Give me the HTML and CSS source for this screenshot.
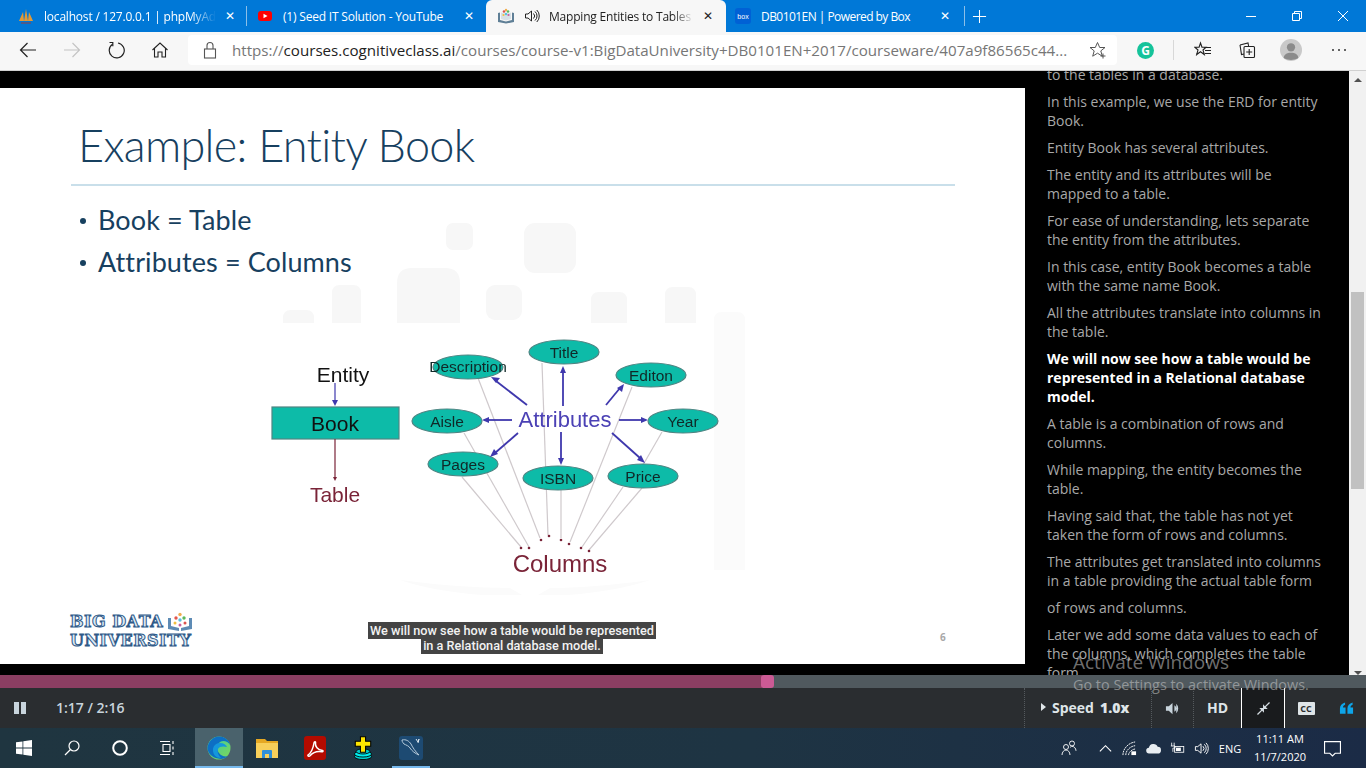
FILE: index.html
```html
<!DOCTYPE html>
<html lang="en">

<head>
    <meta charset="UTF-8">
    <title>Mapping Entities to Tables</title>
    <link rel="stylesheet" href="styles.css">
</head>

<body>

    <!-- browser tabs -->
    <div class="tabstrip">
        <div class="tab tab-first">
            <svg class="favicon" viewBox="0 0 16 16"><path d="M1 13 5 4l1 9zM6 13 8 1l2 12zM10 13l1-9 4 9z" fill="#e39a35"/><path d="M3 15h10" stroke="#4a5a8c" stroke-width="2"/></svg>
            <span class="tab-title fade">localhost / 127.0.0.1 | phpMyAdmin</span>
            <span class="tab-close">&#x2715;</span>
        </div>
        <div class="tab-sep"></div>
        <div class="tab tab-second">
            <svg class="favicon" viewBox="0 0 16 16"><rect x="1" y="3" width="14" height="10" rx="3" fill="#f00"/><path d="M6.500 5.700v4.600L10.500 8z" fill="#fff"/></svg>
            <span class="tab-title">(1) Seed IT Solution - YouTube</span>
            <span class="tab-close">&#x2715;</span>
        </div>
        <div class="tab tab-active">
            <svg class="favicon" viewBox="0 0 16 16"><path d="M0 5l2-.5V12l6 1.500L14 12V4.500l2 .5v9l-8 1.500L0 14z" fill="#5f7f96"/><path d="M3 4.500 8 6l5-1.500V11l-5 1.500L3 11z" fill="#d8e0e6"/><circle cx="6" cy="3.500" r="1.300" fill="#d9534f"/><circle cx="10" cy="3.500" r="1.300" fill="#5cb85c"/><circle cx="8" cy="2" r="1.200" fill="#f0ad4e"/><circle cx="8" cy="6" r="1.300" fill="#5bc0de"/><circle cx="5.500" cy="7" r="1.100" fill="#f0c040"/><circle cx="10.500" cy="7" r="1.100" fill="#c45fa0"/></svg>
            <svg class="favicon speaker" viewBox="0 0 16 16" fill="none" stroke="#222" stroke-width="1"><path d="M1.500 6v4h2.500l3.500 3V3L4 6z"/><path d="M9.500 5.500a3.500 3.500 0 0 1 0 5M11 3.500a6 6 0 0 1 0 9M12.800 2a8.500 8.500 0 0 1 0 12"/></svg>
            <span class="tab-title fade">Mapping Entities to Tables (Course)</span>
            <span class="tab-close">&#x2715;</span>
        </div>
        <div class="tab tab-last">
            <svg class="favicon" viewBox="0 0 16 16"><rect x="0" y="0" width="16" height="16" rx="3" fill="#0061d5"/><text x="8" y="10.500" class="box-mark">box</text></svg>
            <span class="tab-title">DB0101EN | Powered by Box</span>
            <span class="tab-close">&#x2715;</span>
        </div>
        <div class="tab-sep"></div>
        <svg class="new-tab" viewBox="0 0 16 16"><path d="M8 1v14M1 8h14" stroke="#fff" stroke-width="1.100"/></svg>
        <div class="window-buttons">
            <svg viewBox="0 0 12 12"><path d="M1 6.500h10" stroke="#fff"/></svg>
            <svg viewBox="0 0 12 12" fill="none" stroke="#fff"><path d="M1.500 3.500h7v7h-7zM3.500 3.500v-2h7v7h-2"/></svg>
            <svg viewBox="0 0 12 12"><path d="M1 1l10 10M11 1 1 11" stroke="#fff"/></svg>
        </div>
    </div>

    <!-- address bar -->
    <div class="toolbar">
        <button class="tool-btn">
            <svg viewBox="0 0 18 18" fill="none" stroke="#222" stroke-width="1.200"><path d="M17 9H1.500M8.500 2 1.500 9l7 7"/></svg>
        </button>
        <button class="tool-btn">
            <svg viewBox="0 0 18 18" fill="none" stroke="#c4c4c4" stroke-width="1.200"><path d="M1 9h15.500M9.500 2l7 7-7 7"/></svg>
        </button>
        <button class="tool-btn">
            <svg viewBox="0 0 18 18" fill="none" stroke="#222" stroke-width="1.200"><path d="M5.500 3.200A7.500 7.500 0 1 0 11 2"/><path d="M2.500 1.500h3.300v3.800"/></svg>
        </button>
        <button class="tool-btn">
            <svg viewBox="0 0 18 18" fill="none" stroke="#222" stroke-width="1.100"><path d="M1.500 9 9 2l7.500 7M3.500 7.500V16H7v-5h4v5h3.500V7.500"/></svg>
        </button>
        <div class="address">
            <svg class="lock" viewBox="0 0 14 18" fill="none" stroke="#555" stroke-width="1.100"><rect x="1.500" y="8" width="11" height="9"/><path d="M4 8V4.500a3 3 0 0 1 6 0V8"/></svg>
            <span class="url"><span class="url-dim">https://</span>courses.cognitiveclass.ai<span class="url-dim">/courses/course-v1:BigDataUniversity+DB0101EN+2017/courseware/407a9f86565c44...</span></span>
            <svg class="star" viewBox="0 0 18 18" fill="none" stroke="#555"><path d="M8.500 1.500l2.200 5h5.300l-4.200 3.400 1.500 5.300-4.800-3-4.800 3 1.500-5.300L1 6.500h5.300z"/><path d="M14 12.500v5M11.500 15h5"/></svg>
        </div>
        <div class="grammarly">G</div>
        <div class="tool-sep"></div>
        <button class="tool-btn">
            <svg viewBox="0 0 18 18" fill="none" stroke="#222" stroke-width="1.100"><path d="M6.500 2l1.500 4.200h-.5 4.500L9 9l1.300 4.500-3.800-2.800-3.800 2.800L4 9 .8 6.200h4.300z"/><path d="M10.500 6.500H17M11 9.500h6M11 12.500h6"/></svg>
        </button>
        <button class="tool-btn">
            <svg viewBox="0 0 18 18" fill="none" stroke="#222" stroke-width="1.100"><path d="M2 4 10 2l.6 3M2 4l1.500 9.500 2.500-.5"/><rect x="6" y="5.500" width="10.500" height="11" rx="1" fill="#f7f7f7"/><path d="M11.200 8v6M8.200 11h6"/></svg>
        </button>
        <button class="tool-btn">
            <span class="avatar"><svg viewBox="0 0 24 24"><circle cx="12" cy="9" r="4.500" fill="#8b8b8b"/><path d="M4 21c0-4 3.500-6 8-6s8 2 8 6q-8 4-16 0z" fill="#8b8b8b"/></svg></span>
        </button>
        <button class="tool-btn more">
            <svg viewBox="0 0 18 18" fill="#333"><circle cx="3" cy="9" r="1"/><circle cx="9" cy="9" r="1"/><circle cx="15" cy="9" r="1"/></svg>
        </button>
    </div>

    <div class="page">
        <div class="video-area">
            <div class="slide">
                <svg class="slide-art" viewBox="0 88 1025 576">
                    <!-- faint watermark behind the slide -->
                    <g fill="#f7f7f7">
                        <rect x="446" y="223" width="27" height="27" rx="7"/>
                        <rect x="524" y="223" width="52" height="50" rx="11"/>
                        <path d="M397 323v-40q0-15 15-15h33q15 0 15 15v40z"/>
                        <path d="M332 323v-30q0-8 8-8h13q8 0 8 8v30z"/>
                        <path d="M283 323v-5q0-8 8-8h15q8 0 8 8v5z"/>
                        <rect x="486" y="285" width="36" height="35" rx="9"/>
                        <path d="M591 323v-23q0-8 8-8h20q8 0 8 8v23z"/>
                        <path d="M665 323v-28q0-8 8-8h15q8 0 8 8v28z"/>
                    </g>
                    <g fill="#fbfbfb">
                        <path d="M714 570V320q0-8 8-8h15q8 0 8 8v250z"/>
                        <path d="M400 580q60 8 110 8l12 7h-40q-50-4-82-15zM650 580q-60 8-100 8l-12 7h30q50-4 82-15z"/>
                    </g>

                    <!-- gray connector lines to the columns -->
                    <g stroke="#cfc9cc" stroke-width="1.200">
                        <path d="M464 433 529 547"/>
                        <path d="M478 378 540 538"/>
                        <path d="M542 363 548 535"/>
                        <path d="M561 490 561 538"/>
                        <path d="M632 387 570 542"/>
                        <path d="M623 487 582 547"/>
                        <path d="M642 488 589 550"/>
                        <path d="M662 432 643 465"/>
                        <path d="M462 477 521 547"/>
                    </g>
                    <g fill="#7a2438">
                        <circle cx="521" cy="548" r="1.300"/>
                        <circle cx="529" cy="548" r="1.300"/>
                        <circle cx="541" cy="540" r="1.300"/>
                        <circle cx="549" cy="536" r="1.300"/>
                        <circle cx="561" cy="540" r="1.300"/>
                        <circle cx="569" cy="544" r="1.300"/>
                        <circle cx="581" cy="548" r="1.300"/>
                        <circle cx="589" cy="551" r="1.300"/>
                    </g>

                    <!-- ellipses -->
                    <g fill="#0dbba8" stroke="#4f8583" stroke-width="1.200">
                        <ellipse cx="468" cy="367" rx="35" ry="12"/>
                        <ellipse cx="564" cy="352" rx="35" ry="12"/>
                        <ellipse cx="651" cy="375" rx="35" ry="12"/>
                        <ellipse cx="447" cy="421" rx="35" ry="12"/>
                        <ellipse cx="683" cy="421" rx="35" ry="12"/>
                        <ellipse cx="463" cy="464" rx="35" ry="12"/>
                        <ellipse cx="558" cy="478" rx="35" ry="12"/>
                        <ellipse cx="643" cy="476" rx="35" ry="12"/>
                        <rect x="272" y="407" width="127" height="32"/>
                    </g>

                    <!-- blue arrows -->
                    <g stroke="#3f38ad" stroke-width="1.800" fill="#3f38ad">
                        <path d="M527 405 496 381"/><path d="M491 377l9 1-4 5z" stroke="none"/>
                        <path d="M563 406V370"/><path d="M563 366l3 7h-6z" stroke="none"/>
                        <path d="M606 405 620 388"/><path d="M624 384l-2 8-5-4z" stroke="none"/>
                        <path d="M512 420H488"/><path d="M482 420l7-3v6z" stroke="none"/>
                        <path d="M619 420H642"/><path d="M648 420l-7-3v6z" stroke="none"/>
                        <path d="M518 433 495 453"/><path d="M490 457l4-8 4 5z" stroke="none"/>
                        <path d="M561 432V460"/><path d="M561 465l-3-7h6z" stroke="none"/>
                        <path d="M612 433 640 458"/><path d="M645 463l-8-3 4-5z" stroke="none"/>
                        <path d="M335 383V401" stroke-width="1.200"/><path d="M335 406l-3-6h6z" stroke="none"/>
                    </g>
                    <path d="M335 439V478" stroke="#7a2438" stroke-width="1.200"/>
                    <path d="M335 481l-2-4h4z" fill="#7a2438"/>

                    <!-- labels -->
                    <text x="343" y="382" class="dia-big">Entity</text>
                    <text x="335" y="431" class="dia-big">Book</text>
                    <text x="335" y="502" class="dia-big dia-maroon">Table</text>
                    <text x="565" y="427" class="dia-attr">Attributes</text>
                    <text x="560" y="572" class="dia-cols">Columns</text>
                    <text x="468" y="372" class="dia-node">Description</text>
                    <text x="564" y="358" class="dia-node">Title</text>
                    <text x="651" y="381" class="dia-node">Editon</text>
                    <text x="447" y="427" class="dia-node">Aisle</text>
                    <text x="683" y="427" class="dia-node">Year</text>
                    <text x="463" y="470" class="dia-node">Pages</text>
                    <text x="558" y="484" class="dia-node">ISBN</text>
                    <text x="643" y="482" class="dia-node">Price</text>
                </svg>

                <h1 class="slide-title">Example: Entity Book</h1>
                <div class="slide-rule"></div>
                <ul class="slide-list">
                    <li>Book = Table</li>
                    <li>Attributes = Columns</li>
                </ul>

                <div class="slide-logo">
                    <div class="logo-top">
                        <span>BIG DATA</span>
                        <svg viewBox="0 0 26 20"><path d="M1 6v11l11 2V16L4 14V6zM25 6v11l-11 2V16l8-2V6z" fill="#5d8bb5"/><circle cx="9" cy="6" r="1.700" fill="#e2574c"/><circle cx="13" cy="2.500" r="1.700" fill="#f0ad4e"/><circle cx="17" cy="6" r="1.700" fill="#5cb85c"/><circle cx="13" cy="8" r="1.700" fill="#5bc0de"/><circle cx="8" cy="11" r="1.500" fill="#f0c040"/><circle cx="18" cy="11" r="1.500" fill="#d9534f"/><circle cx="13" cy="13" r="1.500" fill="#c45fa0"/></svg>
                    </div>
                    <div>UNIVERSITY</div>
                </div>
                <div class="caption"><span>We will now see how a table would be represented<br>in a Relational database model.</span></div>
                <div class="page-num">6</div>
            </div>
        </div>

        <div class="transcript">
            <div class="transcript-inner">
                <p>to the tables in a database.</p>
                <p>In this example, we use the ERD for entity<br>Book.</p>
                <p>Entity Book has several attributes.</p>
                <p>The entity and its attributes will be<br>mapped to a table.</p>
                <p>For ease of understanding, lets separate<br>the entity from the attributes.</p>
                <p>In this case, entity Book becomes a table<br>with the same name Book.</p>
                <p>All the attributes translate into columns in<br>the table.</p>
                <p class="current">We will now see how a table would be<br>represented in a Relational database<br>model.</p>
                <p>A table is a combination of rows and<br>columns.</p>
                <p>While mapping, the entity becomes the<br>table.</p>
                <p>Having said that, the table has not yet<br>taken the form of rows and columns.</p>
                <p>The attributes get translated into columns<br>in a table providing the actual table form</p>
                <p>of rows and columns.</p>
                <p>Later we add some data values to each of<br>the columns, which completes the table<br>form.</p>
            </div>
        </div>

        <div class="scrollbar">
            <div class="arrow-up"></div>
            <div class="thumb"></div>
            <div class="arrow-down"></div>
        </div>
    </div>

    <!-- player controls -->
    <div class="progress">
        <div class="progress-played"></div>
        <div class="progress-handle"></div>
    </div>
    <div class="controls">
        <div class="pause"><span></span><span></span></div>
        <div class="time">1:17 / 2:16</div>
        <div class="control-cell speed"><span class="speed-caret"></span>Speed<b>1.0x</b></div>
        <div class="control-cell volume">
            <svg viewBox="0 0 16 16" fill="#c8d4dc"><path d="M1 5.500v5h3l4 3.500V2L4 5.500z"/><path d="M10 4.500a4 4 0 0 1 0 7zM12 3a7 7 0 0 1 0 10z"/></svg>
        </div>
        <div class="control-cell hd">HD</div>
        <div class="control-cell fullscreen">
            <svg viewBox="0 0 14 14" fill="#d5dde2"><path d="M13 0 14 1 9.500 5.500 11.500 7.500 6.500 7.500 6.500 2.500 8.500 4.500zM1 14 0 13 4.500 8.500 2.500 6.500H7.500V11.500L5.500 9.500z"/></svg>
        </div>
        <div class="control-cell cc"><span>CC</span></div>
        <div class="control-cell quote">
            <svg viewBox="0 0 16 12" fill="#0ea5e9"><path d="M1 12V6.500C1 3 3 1 6.500 0v2.500C5 3 4.300 4 4.300 5.500H7V12zM9 12V6.500C9 3 11 1 14.500 0v2.500C13 3 12.300 4 12.300 5.500H15V12z"/></svg>
        </div>
    </div>

    <!-- windows taskbar -->
    <div class="taskbar">
        <div class="task-cell">
            <svg viewBox="0 0 16 16" fill="#fff"><path d="M0 2.300 6.500 1.400v6.200H0zM7.300 1.300 16 0v7.600H7.300zM0 8.400h6.500v6.200L0 13.700zM7.300 8.400H16V16l-8.700-1.300z"/></svg>
        </div>
        <div class="task-cell">
            <svg viewBox="0 0 16 16" fill="none" stroke="#fff" stroke-width="1.200"><circle cx="10" cy="6" r="5"/><path d="M6.500 9.500 1 15"/></svg>
        </div>
        <div class="task-cell">
            <svg viewBox="0 0 16 16" fill="none" stroke="#fff" stroke-width="2"><circle cx="8" cy="8" r="6.800"/></svg>
        </div>
        <div class="task-cell">
            <svg viewBox="0 0 16 16" fill="none" stroke="#fff" stroke-width="1.100"><path d="M0 1.500h10M3 4.500h7v7H3zM0 14.500h10M13 1v3M13 6.500v3M13 12v3"/></svg>
        </div>
        <div class="task-cell task-running task-edge">
            <svg viewBox="0 0 24 24"><defs><linearGradient id="edgeA" x1="0" y1="0" x2="1" y2="1"><stop offset="0" stop-color="#39c7a8"/><stop offset="1" stop-color="#7ed957"/></linearGradient></defs><circle cx="12" cy="12" r="11.500" fill="url(#edgeA)"/><path d="M.5 12C1 5 7 .5 12 .5c5 0 10 3 11 8.500-2-4-7-5-10-3-3 2-4 7-1 11 2 3 6 4 9 3-3 3-7 3.500-10 2.500C5 21.500.5 17 .5 12z" fill="#0d6fc4"/><path d="M6 15c-.5-5 3-8 7-8s6 2 7 4c-3-1-8-1-9 2-1 3 0 6 3 9-5 0-7.500-3-8-7z" fill="#1597dc"/></svg>
        </div>
        <div class="task-cell">
            <svg viewBox="0 0 24 24"><path d="M1 3h9l2 2h11v5H1z" fill="#e5a823"/><rect x="1" y="7" width="22" height="15" fill="#f7cf5a"/><path d="M7 22v-7q0-1 1-1h8q1 0 1 1v7h-3v-4h-4v4z" fill="#2f8fd8"/></svg>
        </div>
        <div class="task-cell task-pdf">
            <svg viewBox="0 0 24 24"><rect x="1" y="0" width="22" height="24" rx="3" fill="#b30b00"/><path d="M5 19c3-2 5-6 6-12 .2-2 2-1.500 1.500 0-.5 3 2 7 7 7.500 1 .3.500 1.500-.5 1.300-5-1-9 .5-12 4-1 1-2.500 0-2-.8z" fill="none" stroke="#fff" stroke-width="1.500"/></svg>
        </div>
        <div class="task-cell">
            <svg viewBox="0 0 24 28"><ellipse cx="12" cy="24" rx="10" ry="3.500" fill="#0cc" stroke="#000"/><ellipse cx="12" cy="21" rx="10" ry="3.500" fill="#0ee" stroke="#000"/><ellipse cx="12" cy="18" rx="8" ry="3" fill="#0cc" stroke="#000"/><path d="M9 1h6v5h6v6h-6v7H9v-7H3V6h6z" fill="#ffe600" stroke="#000" stroke-width="1.200"/></svg>
        </div>
        <div class="task-cell task-running task-mysql">
            <svg viewBox="0 0 24 24"><rect width="24" height="24" rx="3" fill="#1d4a72"/><path d="M3 4c4-1 7 1 9 4 2 4 4 7 8 11-4-1.500-7-4-9-7-1-2-4-3-6-4-1-1.500-2-2-2-4z" fill="none" stroke="#b6cadb"/><path d="M17 3l2 3 1-3-1 4" fill="none" stroke="#dbe6ef"/></svg>
        </div>

        <div class="tray">
            <div class="tray-person">
                <svg viewBox="0 0 16 16" fill="none" stroke="#fff" stroke-width=".9"><circle cx="11" cy="3.500" r="2.500"/><circle cx="5" cy="7" r="2.500"/><path d="M1 15c0-3 2-5 4-5s4 2 4 5M9 7.500c1-1 1.500-1.200 2-1.200 2 0 4 2 4 4.500"/></svg>
            </div>
            <div class="tray-item tray-first">
                <svg viewBox="0 0 16 16" fill="none" stroke="#fff" stroke-width="1.200"><path d="M2 11l6-6 6 6"/></svg>
            </div>
            <div class="tray-item">
                <svg viewBox="0 0 16 16" fill="none" stroke="#fff" stroke-width="1"><path d="M1 15C1 8 7 2 14 1M4 15c0-5 5-9.500 10-10M7 15c0-3 3.500-6 7-6.500" stroke-dasharray="2 .7"/><rect x="10" y="11" width="5" height="4" fill="#fff" stroke="none"/></svg>
            </div>
            <div class="tray-item">
                <svg viewBox="0 0 18 14" fill="#e8edf1"><path d="M4 13a3.500 3.500 0 0 1-.5-7A5.500 5.500 0 0 1 14 5a4 4 0 0 1 0 8z"/></svg>
            </div>
            <div class="tray-item">
                <svg viewBox="0 0 18 16" fill="none" stroke="#fff"><rect x="5.500" y="5.500" width="11" height="7"/><rect x="7" y="7" width="6" height="4" fill="#fff" stroke="none"/><path d="M2 1v4M5 1v4M1 5h5v2.500H3.500V12"/></svg>
            </div>
            <div class="tray-item">
                <svg viewBox="0 0 16 16" fill="none" stroke="#fff"><path d="M1.500 6v4h2.500l3.500 3V3L4 6z"/><path d="M9.500 5.500a3.500 3.500 0 0 1 0 5M11 3.500a6 6 0 0 1 0 9M12.800 2a8.500 8.500 0 0 1 0 12"/></svg>
            </div>
            <div class="tray-lang">ENG</div>
            <div class="tray-clock">11:11 AM<br>11/7/2020</div>
            <div class="tray-notify">
                <svg viewBox="0 0 16 16" fill="none" stroke="#fff" stroke-width="1.100"><path d="M.5 1.500h15v11h-5l-2.500 2.500-2.500-2.500h-5z"/></svg>
            </div>
        </div>
    </div>

    <div class="activate">
        <div class="activate-title">Activate Windows</div>
        <div class="activate-sub">Go to Settings to activate Windows.</div>
    </div>

</body>

</html>
```

FILE: styles.css
```css
* {
    box-sizing: border-box;
}

html,
body {
    margin: 0;
    padding: 0;
}

body {
    position: relative;
    width: 1366px;
    height: 768px;
    overflow: hidden;
    display: flex;
    flex-direction: column;
    font-family: "Open Sans", "Noto Sans", sans-serif;
    background: #000;
}

/* tab strip */
.tabstrip {
    height: 32px;
    display: flex;
    align-items: center;
    background: #0078d7;
    color: #fff;
    font-size: 12px;
}

.tab {
    height: 32px;
    display: flex;
    align-items: center;
    flex-shrink: 0;
}

.tab-first {
    width: 246px;
    padding: 0 8px 0 18px;
}

.tab-second {
    width: 239px;
    padding: 0 9px 0 10px;
}

.tab-active {
    width: 240px;
    padding: 0 10px 0 12px;
    background: #f7f7f7;
    color: #222;
    border-radius: 6px 6px 0 0;
}

.tab-last {
    width: 238px;
    padding: 0 11px 0 9px;
}

.favicon {
    width: 16px;
    height: 16px;
    flex-shrink: 0;
    margin-right: 10px;
}

.speaker {
    margin-right: 9px;
}

.box-mark {
    font-family: "Liberation Sans", sans-serif;
    font-size: 7px;
    fill: #fff;
    text-anchor: middle;
}

.tab-title {
    flex: 1;
    min-width: 0;
    white-space: nowrap;
    overflow: hidden;
    letter-spacing: -0.2px;
}

.tab-last .tab-title {
    letter-spacing: -0.55px;
}

.fade {
    -webkit-mask-image: linear-gradient(to right, #000 85%, transparent 100%);
    mask-image: linear-gradient(to right, #000 85%, transparent 100%);
}

.tab-close {
    width: 16px;
    margin-left: 6px;
    text-align: center;
    font-size: 12px;
    font-family: "DejaVu Sans", sans-serif;
}

.tab-sep {
    width: 1px;
    height: 20px;
    background: #8cbfe8;
    flex-shrink: 0;
}

.new-tab {
    width: 15px;
    height: 15px;
    margin-left: 7px;
}

.window-buttons {
    margin-left: auto;
    display: flex;
    gap: 34px;
    padding-right: 17px;
}

.window-buttons svg {
    width: 12px;
    height: 12px;
}

/* toolbar */
.toolbar {
    height: 39px;
    display: flex;
    align-items: center;
    padding: 0 0 2px 6px;
    background: #f7f7f7;
    border-bottom: 1px solid #d0d0d0;
}

.tool-btn {
    width: 44px;
    height: 30px;
    padding: 0;
    border: none;
    background: none;
    display: flex;
    align-items: center;
    justify-content: center;
    flex-shrink: 0;
}

.tool-btn svg {
    width: 18px;
    height: 18px;
}

.address {
    width: 929px;
    height: 30px;
    margin-left: 6px;
    padding: 0 10px 0 15px;
    display: flex;
    align-items: center;
    background: #fff;
    border-radius: 4px;
}

.lock {
    width: 14px;
    height: 18px;
    flex-shrink: 0;
}

.url {
    margin-left: 15px;
    flex: 1;
    font-size: 15.130px;
    color: #222;
    white-space: nowrap;
    overflow: hidden;
}

.url-dim {
    color: #767676;
}

.star {
    width: 18px;
    height: 18px;
    flex-shrink: 0;
}

.grammarly {
    width: 17px;
    height: 17px;
    margin-left: 20px;
    border-radius: 50%;
    background: #15c39a;
    color: #fff;
    font-size: 12px;
    font-weight: 700;
    text-align: center;
    line-height: 17px;
}

.tool-sep {
    width: 1px;
    height: 20px;
    margin: 0 7px 0 19px;
    background: #d8d8d8;
}

.avatar {
    width: 22px;
    height: 22px;
    border-radius: 50%;
    background: #c9c9c9;
    overflow: hidden;
    display: block;
}

.avatar svg {
    width: 22px;
    height: 22px;
    display: block;
}

.more {
    margin-left: 4px;
}

/* page area */
.page {
    height: 604px;
    display: flex;
    background: #000;
}

.video-area {
    width: 1025px;
    padding-top: 17px;
}

.slide {
    position: relative;
    width: 1025px;
    height: 576px;
    padding: 24px 71px 0;
    background: #fff;
}

.slide-art {
    position: absolute;
    left: 0;
    top: 0;
    width: 1025px;
    height: 576px;
    filter: blur(0.4px);
}

.slide-title {
    position: relative;
    margin: 0 0 0 7px;
    font-family: Lato, sans-serif;
    font-weight: 300;
    font-size: 45px;
    line-height: 66px;
    letter-spacing: -0.7px;
    font-variant-ligatures: none;
    color: #17405f;
}

.slide-rule {
    position: relative;
    width: 884px;
    height: 2px;
    margin-top: 6px;
    background: #c9dfea;
}

.slide-list {
    position: relative;
    list-style: none;
    margin: 13px 0 0 8px;
    padding: 0 0 0 19px;
    font-family: Lato, sans-serif;
    font-size: 27px;
    line-height: 42px;
    letter-spacing: 0.1px;
    color: #17405f;
}

.slide-list li::before {
    content: "";
    display: inline-block;
    width: 6px;
    height: 6px;
    margin: 0 12px 6px -18px;
    border-radius: 50%;
    background: #17405f;
}

.slide-logo {
    position: absolute;
    left: 70px;
    top: 524px;
    font-family: "DejaVu Serif", serif;
    font-weight: 700;
    font-size: 16px;
    line-height: 18px;
    letter-spacing: 0.5px;
    color: #dbe9f5;
    -webkit-text-stroke: 1px #2f5a88;
}

.logo-top {
    display: flex;
    align-items: center;
}

.logo-top svg {
    width: 26px;
    height: 20px;
    margin-left: 4px;
}

.caption {
    position: absolute;
    left: 312px;
    top: 535px;
    width: 400px;
    text-align: center;
    font-family: Roboto, sans-serif;
    font-weight: 500;
    font-size: 12.700px;
    line-height: 15px;
    color: #f2f2f2;
}

.caption span {
    background: #444;
    padding: 1px 2px;
    -webkit-box-decoration-break: clone;
    box-decoration-break: clone;
}

.page-num {
    position: absolute;
    left: 940px;
    top: 542px;
    font-size: 10px;
    font-weight: 700;
    color: #a8a8a8;
}

/* transcript column */
.transcript {
    width: 324px;
    padding-left: 22px;
    overflow: hidden;
    font-size: 14px;
    line-height: 19px;
    color: #a8a8a8;
}

.transcript-inner {
    margin-top: -6px;
}

.transcript p {
    margin: 0 0 8px;
    white-space: nowrap;
}

.transcript .current {
    color: #fff;
    font-weight: 700;
}

.scrollbar {
    position: relative;
    width: 17px;
    background: #f1f1f1;
}

.thumb {
    position: absolute;
    left: 2px;
    width: 13px;
    top: 221px;
    height: 197px;
    background: #c1c1c1;
}

.arrow-up,
.arrow-down {
    position: absolute;
    left: 5px;
    width: 0;
    height: 0;
    border-left: 4px solid transparent;
    border-right: 4px solid transparent;
}

.arrow-up {
    top: 7px;
    border-bottom: 4px solid #505050;
}

.arrow-down {
    bottom: 0;
    border-top: 4px solid #505050;
}

/* progress bar */
.progress {
    position: relative;
    height: 13px;
    background: #50595e;
}

.progress-played {
    width: 762px;
    height: 13px;
    background: #8b3e62;
}

.progress-handle {
    position: absolute;
    left: 761px;
    top: 0;
    width: 13px;
    height: 13px;
    border-radius: 3px;
    background: #cb5a94;
}

/* control bar */
.controls {
    height: 40px;
    display: flex;
    align-items: center;
    background: #2a2d30;
    color: #c8d4dc;
    font-size: 14px;
}

.pause {
    display: flex;
    gap: 2px;
    width: 56px;
    padding-left: 14px;
}

.pause span {
    width: 5px;
    height: 12px;
    background: #c8d4dc;
}

.time {
    width: 968px;
    font-weight: 600;
    padding-bottom: 2px;
}

.control-cell {
    height: 40px;
    display: flex;
    align-items: center;
    justify-content: center;
    border-left: 1px dotted #555a5e;
    color: #dfe5e8;
    font-weight: 700;
}

.speed {
    width: 127px;
    padding: 0 0 2px 16px;
    justify-content: flex-start;
    font-size: 14px;
}

.speed b {
    margin-left: 6px;
}

.speed-caret {
    width: 0;
    height: 0;
    margin-right: 6px;
    border-left: 5px solid #dfe5e8;
    border-top: 4px solid transparent;
    border-bottom: 4px solid transparent;
}

.volume {
    width: 42px;
}

.volume svg {
    width: 15px;
    height: 15px;
}

.hd {
    width: 48px;
    padding-bottom: 2px;
    font-size: 14px;
}

.fullscreen {
    width: 44px;
    background: #191b1d;
    border-left: 1px solid #fff;
    border-right: 1px solid #fff;
}

.fullscreen svg {
    width: 13px;
    height: 13px;
}

.cc {
    width: 42px;
    border-left: none;
}

.cc span {
    width: 17px;
    height: 13px;
    background: #dfe5e8;
    color: #2a2d30;
    font-size: 9px;
    line-height: 13px;
    text-align: center;
    border-radius: 1px;
}

.quote {
    width: 39px;
    border-left: none;
}

.quote svg {
    width: 15px;
    height: 12px;
}

/* taskbar */
.taskbar {
    height: 40px;
    display: flex;
    background: linear-gradient(to right, #1f3540 0%, #1e3443 55%, #1b2b46 100%);
    color: #fff;
}

.task-cell {
    position: relative;
    width: 48px;
    height: 40px;
    display: flex;
    align-items: center;
    justify-content: center;
    flex-shrink: 0;
}

.task-cell svg {
    width: 16px;
    height: 16px;
}

.task-edge svg,
.task-edge ~ .task-cell svg {
    width: 24px;
    height: 24px;
}

.task-edge {
    margin-left: 3px;
    background: #4a626c;
}

.task-running::after {
    content: "";
    position: absolute;
    bottom: 0;
    left: 0;
    right: 0;
    height: 2px;
    background: #76b9ed;
}

.task-mysql::after {
    left: 5px;
    right: 5px;
}

.tray {
    margin-left: auto;
    display: flex;
    align-items: center;
    padding-right: 15px;
}

.tray-person {
    width: 34px;
    margin-right: 7px;
    display: flex;
    justify-content: center;
}

.tray-person svg {
    width: 16px;
    height: 16px;
}

.tray-item {
    width: 24px;
    display: flex;
    justify-content: center;
}

.tray-item svg {
    width: 15px;
    height: 15px;
}

.tray-lang {
    width: 34px;
    text-align: center;
    font-size: 11px;
}

.tray-clock {
    width: 66px;
    text-align: center;
    font-size: 11px;
    line-height: 18px;
}

.tray-notify {
    width: 38px;
    display: flex;
    justify-content: center;
}

.tray-notify svg {
    width: 17px;
    height: 17px;
}

/* svg diagram text */
.dia-big,
.dia-attr,
.dia-cols,
.dia-node {
    font-family: "Liberation Sans", sans-serif;
    text-anchor: middle;
}

.dia-big {
    font-size: 21px;
    fill: #111;
}

.dia-maroon {
    fill: #7a2438;
}

.dia-attr {
    font-size: 22px;
    fill: #4b41b5;
}

.dia-cols {
    font-size: 24px;
    fill: #7a2438;
}

.dia-node {
    font-size: 15.500px;
    fill: #102827;
}

/* windows watermark, sits over everything */
.activate {
    position: absolute;
    left: 1073px;
    top: 650px;
    color: rgba(205, 205, 205, 0.55);
    pointer-events: none;
}

.activate-title {
    font-size: 19px;
    line-height: 24px;
}

.activate-sub {
    margin-top: 1px;
    font-size: 14.400px;
    line-height: 20px;
}
```
